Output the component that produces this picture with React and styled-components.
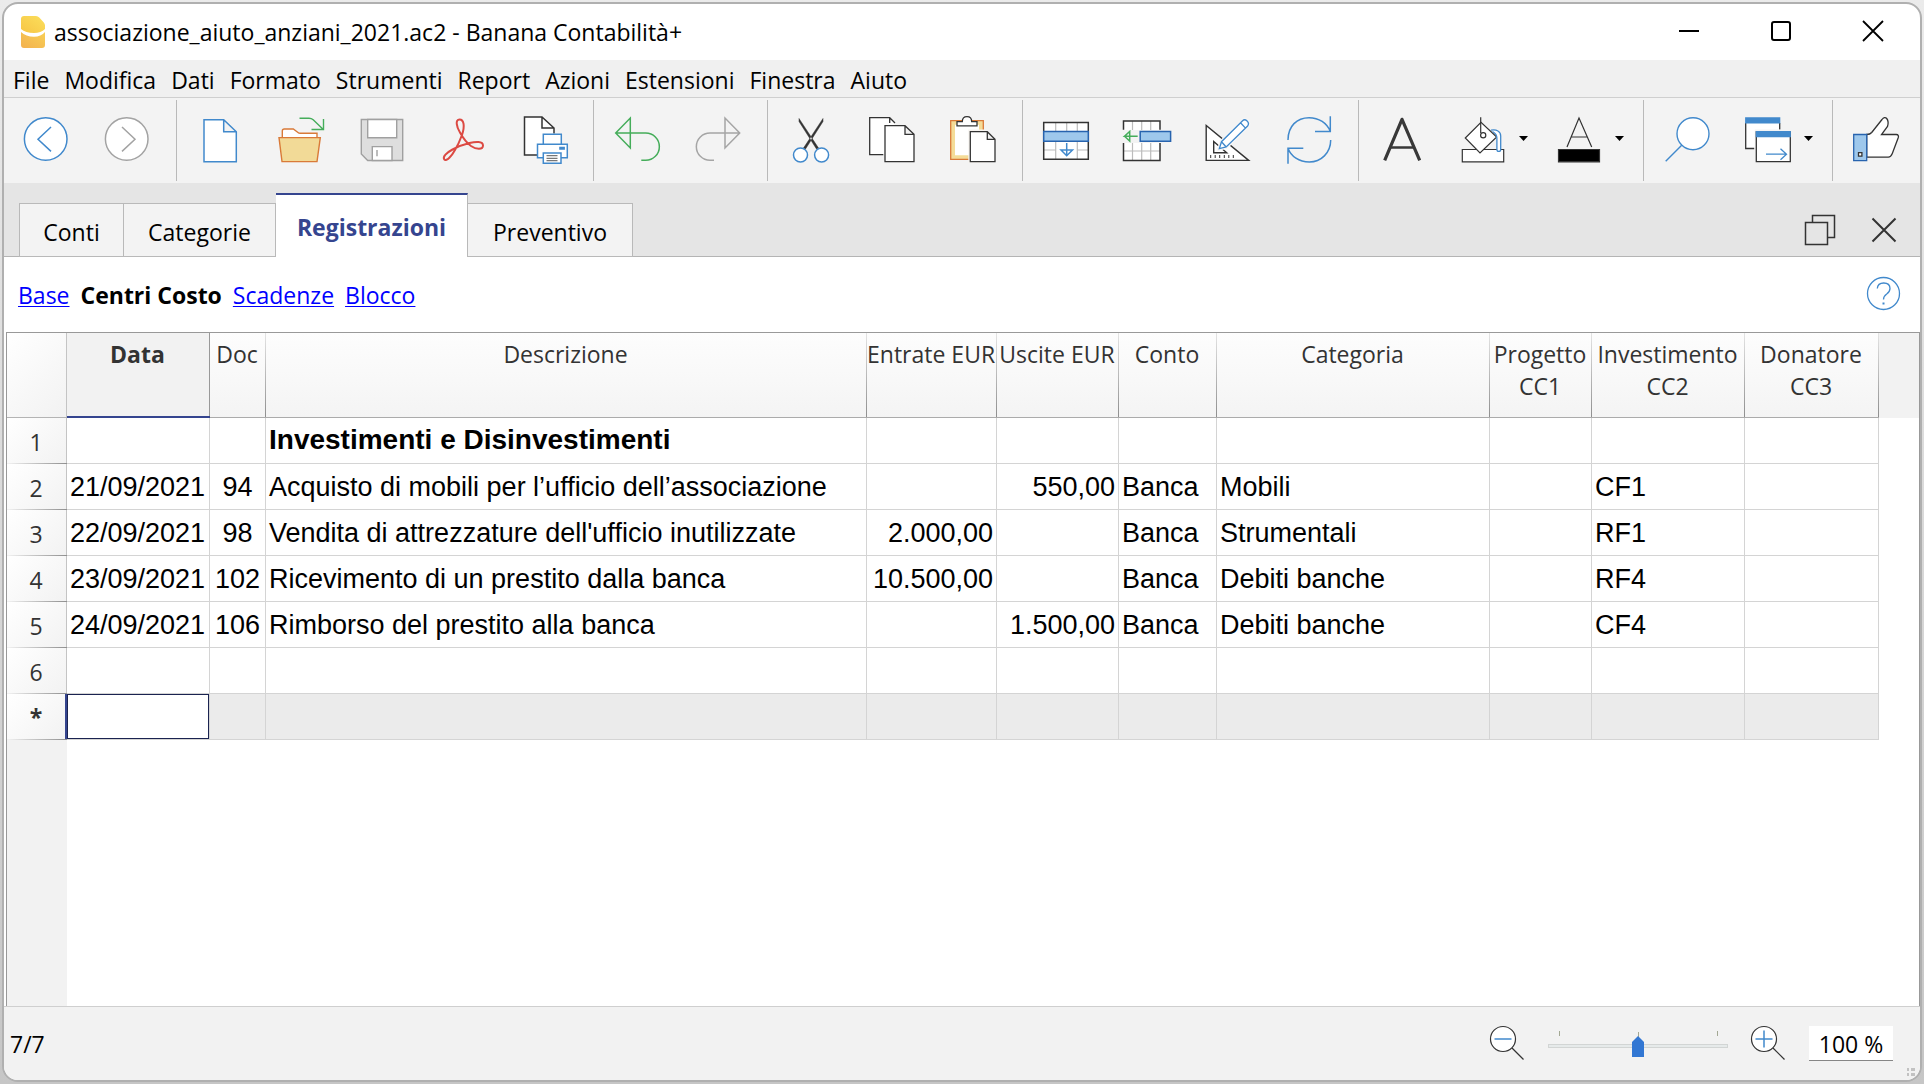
import React from 'react';
import styled, { createGlobalStyle, css } from 'styled-components';

const BLUE = '#4189cc';
const INK = '#333333';
const NAVY = '#35458f';
const GREEN = '#45ad5a';

const GlobalStyle = createGlobalStyle`
  *, *::before, *::after { box-sizing: border-box; }
  html, body, #root { height: 100%; }
  body {
    margin: 0;
    font-family: "Open Sans", "Noto Sans", sans-serif;
    font-size: 23px;
    line-height: 32px;
    color: #000;
    background: linear-gradient(#ebebeb, #c6c6c6);
  }
  button, input { font: inherit; color: inherit; }
  svg { display: block; overflow: visible; flex: none; }
`;

const Page = styled.div`
  height: 100%;
  min-height: 800px;
  padding: 2px;
`;

const Window = styled.div`
  display: flex;
  flex-direction: column;
  height: 100%;
  border: 2px solid #b0b0b0;
  border-radius: 16px;
  background: #fff;
  overflow: hidden;
`;

const TitleBar = styled.header`
  display: flex;
  align-items: center;
  height: 56px;
  padding: 0 1px 0 17px;
`;

const Title = styled.h1`
  flex: 1;
  margin: 0 0 0 9px;
  font-size: 23px;
  font-weight: 400;
  white-space: nowrap;
`;

const PlainButton = styled.button`
  display: flex;
  align-items: center;
  justify-content: center;
  padding: 0;
  border: 0;
  background: none;
`;

const CaptionButton = styled(PlainButton)`
  width: 92px;
  height: 56px;
  padding-bottom: 2px;
`;

const MenuBar = styled.nav`
  display: flex;
  height: 38px;
  padding-left: 1px;
  background: #f0f0f0;
  border-bottom: 1px solid #cfcfcf;
`;

const MenuItem = styled(PlainButton)`
  padding: 2px 7px 0 8px;
`;

const Toolbar = styled.div`
  display: flex;
  align-items: flex-start;
  height: 85px;
  padding: 0 0 2px 1px;
  background: #f3f3f3;
`;

const ToolButton = styled(PlainButton)`
  justify-content: flex-start;
  gap: 12px;
  width: ${(p) => (p.$menu ? 96 : 81)}px;
  height: 81px;
  padding-left: 16px;
`;

const Separator = styled.div`
  align-self: flex-end;
  width: 1px;
  height: 81px;
  margin: 0 2px 0 9px;
  background: #b9b9b9;
`;

const TabStrip = styled.div`
  display: flex;
  align-items: flex-end;
  height: 74px;
  padding-left: 15px;
  background: #e5e5e5;
  box-shadow: inset 0 -1px #b4b4b4;
`;

const Tab = styled(PlainButton)`
  width: ${(p) => p.$width}px;
  height: 54px;
  padding-top: 3px;
  border: 1px solid #b9b9b9;
  border-left-width: ${(p) => (p.$first ? 1 : 0)}px;
  background: #f3f3f3;
  ${(p) => p.$active && css`
    height: 64px;
    padding: 1px 0 0;
    border-top: 2px solid ${NAVY};
    border-bottom: 0;
    background: #fff;
    color: ${NAVY};
    font-weight: 700;
  `}
`;

const TabTools = styled.div`
  display: flex;
  gap: 32px;
  margin-left: auto;
  padding: 0 20px 11px 0;
`;

const ViewBar = styled.nav`
  display: flex;
  align-items: center;
  gap: 11px;
  height: 75px;
  padding: 0 20px 0 14px;
`;

const ViewLink = styled.a`
  color: #0000ff;
  text-decoration: underline;
  text-decoration-thickness: 1px;
  text-underline-offset: 2px;
`;

const CurrentView = styled.strong`
  font-weight: 700;
`;

const HelpButton = styled(PlainButton)`
  margin: 0 0 2px auto;
`;

const Grid = styled.main`
  flex: 1;
  margin: 0 0 0 2px;
  border: 1px solid #999;
  border-bottom: 0;
  background: linear-gradient(to right, #f2f2f2 60px, #fff 60px);
`;

const Table = styled.table`
  width: 100%;
  table-layout: fixed;
  border-collapse: separate;
  border-spacing: 0;
  white-space: nowrap;
`;

const Col = styled.col`
  width: ${(p) => (p.$width ? `${p.$width}px` : 'auto')};
`;

const ColumnHead = styled.th`
  height: 85px;
  padding: 5px 2px 0 0;
  vertical-align: top;
  font-weight: 400;
  color: ${INK};
  border-bottom: 1px solid #ababab;
  background:
    linear-gradient(#e4e4e4, #8f8f8f) right / 1px 100% no-repeat,
    linear-gradient(#fdfdfd, #f4f4f4);
  ${(p) => p.$active && css`
    font-weight: 700;
    border-bottom: 2px solid ${NAVY};
    background:
      linear-gradient(#999, #999) right / 1px 100% no-repeat,
      #f2f2f2;
  `}
`;

const CornerHead = styled.td`
  border-bottom: 1px solid #b4b4b4;
  background:
    linear-gradient(#c4c4c4, #c4c4c4) right / 1px 100% no-repeat,
    linear-gradient(135deg, #fff, #f2f2f2);
`;

const HeadFiller = styled.td`
  background: #f2f2f2;
`;

const RowHead = styled.th`
  height: 46px;
  padding: ${(p) => (p.$marker ? 0 : 1)}px 2px 0 0;
  font-weight: ${(p) => (p.$marker ? 700 : 400)};
  color: ${INK};
  background:
    linear-gradient(to right, #f2f2f2, #8f8f8f) bottom / 100% 1px no-repeat,
    linear-gradient(#c4c4c4, #c4c4c4) right / 1px 100% no-repeat,
    linear-gradient(135deg, #fff, #f2f2f2);
`;

const Cell = styled.td`
  height: 46px;
  padding: ${(p) => (p.$editing ? '0' : '0 3px')};
  border-right: 1px solid #d4d4d4;
  border-bottom: 1px solid #d4d4d4;
  font: 400 27px/32px "Liberation Sans", Arial, sans-serif;
  text-align: ${(p) => p.$align};
  background: ${(p) => (p.$muted ? '#ebebeb' : '#fff')};
  ${(p) => p.$heading && css`
    padding-bottom: 2px;
    font-size: 28px;
    font-weight: 700;
  `}
`;

const CellInput = styled.input`
  display: block;
  width: 100%;
  height: 45px;
  padding: 0 2px;
  border: 1px solid #1a2350;
  border-radius: 0;
  background: #fff;
  box-shadow: -2px 0 0 ${NAVY};
  outline: 0;
`;

const StatusBar = styled.footer`
  display: flex;
  align-items: center;
  gap: 23px;
  height: 74px;
  padding: 0 5px 0 6px;
  border-top: 1px solid #cfcfcf;
  background: #f2f2f2;
`;

const Counter = styled.span`
  flex: 1;
  padding-top: 1px;
`;

const ZoomSlider = styled.input`
  appearance: none;
  width: 180px;
  height: 35px;
  margin: 0;
  padding: 5px 0 0;
  background:
    linear-gradient(#a3a893, #a3a893) 11px 5px / 1px 5px no-repeat,
    linear-gradient(#a3a893, #a3a893) 90px 6px / 1px 5px no-repeat,
    linear-gradient(#a3a893, #a3a893) 169px 5px / 1px 5px no-repeat;

  &::-webkit-slider-runnable-track {
    height: 4px;
    border: 1px solid #d2d5d4;
    background: #e6eaea;
  }
  &::-webkit-slider-thumb {
    appearance: none;
    width: 12px;
    height: 21px;
    margin-top: -9px;
    background: #3277d3;
    clip-path: polygon(0 6px, 6px 0, 100% 6px, 100% 100%, 0 100%);
  }
`;

const ZoomValue = styled.input`
  width: 84px;
  height: 35px;
  padding: 2px 0 0;
  border: 0;
  border-bottom: 1px solid #868686;
  background: #fff;
  text-align: center;
`;

const Grip = styled.div`
  align-self: flex-end;
  display: grid;
  grid-template-columns: 2px 4px;
  gap: 2px;
  margin: 0 0 4px -9px;
`;

const GripDot = styled.i`
  height: 3px;
  background: #c2c2c2;
`;

function Icon({ children, size = 49, color = INK, width = 1.2, ...rest }) {
  return (
    <svg width={size} height={size} viewBox={`0 0 ${size} ${size}`} fill="none" stroke={color} strokeWidth={width} aria-hidden="true" {...rest}>
      {children}
    </svg>
  );
}

const Back = () => (
  <Icon color={BLUE} width={1.5}><circle cx="24.7" cy="25" r="21.3" fill="#fff" /><path d="M30 13 17 25.2l13 12.2" /></Icon>
);
const Forward = () => (
  <Icon color="#a3a3a3" width={1.5}><circle cx="24.7" cy="25" r="21.3" fill="#fff" /><path d="M20 13l13 12.2-13 12.2" /></Icon>
);
const NewFile = () => (
  <Icon color={BLUE} width={1.5}><path d="M9 5.7h19.7l12.6 12v30H9zM28.7 5.7v12h12.6" fill="#fff" /></Icon>
);
const OpenFile = () => (
  <Icon color="#d97a38" width={1.4}>
    <path d="M6.3 23.5V17q0-2 2-2h9l5 3.7q.5.5 2 .5H41v4.3" fill="#fff" />
    <path d="M3 23.6h41.3l-3.3 24H6z" fill="#f2da97" />
    <path d="M23.5 4.3H33q2.5 0 4.200 1.500L47.300 15.500M47.500 5v10.500H35.500" stroke={GREEN} />
  </Icon>
);
const Save = () => (
  <Icon color="#a0a0a0" width={1.4}>
    <path d="M4.3 5.500h41.400v41H10.700L4.300 40z" fill="#dedede" />
    <path d="M10.700 5.500h29v18.200h-29zM15.300 32.600H35v13.900H15.300z" fill="#fff" />
    <path d="M20 36v6.300" />
  </Icon>
);
const Pdf = () => (
  <Icon color="#dc4a43" width={2}>
    <path d="M24 21C27 12 26 5.500 21.500 5.500 17 5.500 18.500 13 22 18.500 25 24 29 29 33 32 38 35.500 45 36 45 31.500 45 27 37.500 27.600 31.500 29 26 30.300 20 32.500 14.500 35.500 8.500 38.800 4.500 42.500 6.200 45.300 8.500 48 14 41.500 17 36 20 31 22.500 25 24 21z" />
  </Icon>
);
const Print = () => (
  <Icon width={1.5}>
    <path d="M18 41H5.500V3H23l12 11v6H24v10h-6z" fill="#fff" stroke="none" />
    <path d="M18 41H5.500V3H23l12 11v5.500M23 3v11h12" />
    <g stroke={BLUE}>
      <path d="M24.300 20.300h18v10h-18zM18.500 30.300h29.800v13.400H18.500z" fill="#fff" />
      <path d="M40.200 32.700h5.700v3h-5.700z" fill={BLUE} stroke="none" />
      <path d="M24.300 39h17.700v10.300H24.300z" fill="#fff" />
    </g>
    <path d="M27.500 41.700h11M27.500 44.300h11M27.500 46.700h11" strokeWidth="1.200" stroke="#777" />
  </Icon>
);
const Undo = () => (
  <Icon color={GREEN} width={1.5}><path d="M3.700 19 18.300 4v30zM3.700 19H33.700a13.650 13.650 0 0 1 0 27.300H29.300" /></Icon>
);
const Redo = () => (
  <Icon color="#a5a5a5" width={1.5}><path d="M46.700 19 32 4v30zM46.700 19H17a13.650 13.650 0 0 0 0 27.300h4" /></Icon>
);
const Cut = () => (
  <Icon width={1}>
    <path d="M13 4.500v3l17.500 27.500 2-1zM37 4.500v3L19.500 35l-2-1z" fill={INK} stroke={INK} strokeWidth="0.500" />
    <g stroke={BLUE} strokeWidth="1.500" fill="#fff"><circle cx="14.500" cy="41" r="7" /><circle cx="35.600" cy="41" r="7" /></g>
  </Icon>
);
const Copy = () => (
  <Icon width={1.3}>
    <path d="M16.300 40.700H2.700v-37h20l5.300 5.300v3H18v28.700z" fill="#fff" stroke="none" />
    <path d="M16.300 40.700H2.700v-37h20L28 9M22.700 3.700V9" />
    <path d="M18 11.700h20l9 8.600v27.400H18zM38 11.700v8.600h9" fill="#fff" />
  </Icon>
);
const Paste = () => (
  <Icon width={1.3}>
    <path d="M2.700 6.700h32.600v38.600H2.700z" fill="#f4dc98" stroke="#d97a38" />
    <path d="M7 10.700h24v30.600H7z" fill="#fff" stroke="none" />
    <path d="M20.300 15.600H38V49H20.300z" fill="#f7f4f0" stroke="none" />
    <path d="M9 11.900V7.700h5.300q0-5 4.700-5t4.700 5H29v4.200z" fill="#fff" />
    <path d="M22.300 17.700h17l7.700 7.600v22.400H22.300zM39.300 17.700v7.600H47" fill="#fff" />
  </Icon>
);
const InsertRow = () => (
  <Icon width={1.5}>
    <path d="M2.700 8.500h44.600v36.800H2.700z" fill="#fff" stroke="none" />
    <path d="M14.700 8.500V18M25.700 8.500V18M36.300 8.500V18M14.700 28v17M36.300 28v17M2.700 36h12M36.300 36h11" stroke="#bcbcbc" strokeWidth="1.200" />
    <path d="M2.700 8.500h44.600v36.800H2.700z" />
    <path d="M2.700 17.500h44.600v9.800H2.700z" fill="#9ec8ec" stroke="#2763ae" />
    <path d="M25.700 29v12.500M20 36h11.500l-5.800 5.800z" stroke={BLUE} />
  </Icon>
);
const DeleteRow = () => (
  <Icon width={1.5}>
    <path d="M1.500 7H38v9H1.500zM1.500 29H38v17.500H1.500z" fill="#fff" stroke="none" />
    <path d="M10.500 7v9M19.700 7v9M28.700 7v9M10.500 29v17.500M19.700 29v17.500M28.700 29v17.500M1.500 37H38" stroke="#bcbcbc" strokeWidth="1.200" />
    <path d="M1.500 15.700V7H38v8.700M1.500 29v17.500H38V29" />
    <path d="M18.200 17.500h30.400v9.800H18.200z" fill="#9ec8ec" stroke="#2763ae" />
    <path d="M15.700 22.300H2.500l5.200-4.800v9.600l-5.200-4.800" stroke={GREEN} />
  </Icon>
);
const Design = () => (
  <Icon width={1.4}>
    <path d="M3.200 11.500v34.900h42.500zM10.700 27.500v11.200h13z" fill="#fff" />
    <path d="M7.700 41v3M12.200 41v3M16.700 41v3M21.300 41v3M25.800 41v3M30.300 41v3" strokeWidth="1" />
    <path d="M16.300 34.700l2.200-7L39.600 6.700q2-2 4.500.3t.5 5L23.200 33z" fill="#fff" stroke="#f6f6f6" strokeWidth="4" />
    <path d="M16.300 34.700l2.200-7L39.600 6.700q2-2 4.500.3t.5 5L23.200 33zM18.500 27.700l4.700 5.300M37.500 8.800l5 5.300" fill="#fff" stroke={BLUE} strokeWidth="1.300" />
  </Icon>
);
const Refresh = () => (
  <Icon color={BLUE} width={1.5}>
    <path d="M4 26C4 12 13 3.700 25 3.700c10 0 18 5.500 21.300 13.800M46.300 2.300v15.200H31M46.700 26C46.700 39 37 48 25.300 48 15 48 7 42.500 4 34.300M4 49.700V34.300h15.300" />
  </Icon>
);
const Bold = () => (
  <Icon color="#383838" width={3.2} strokeLinejoin="round"><path d="M7.700 46.300 25 5.300l17.700 41" /><path d="M14 33.500h22" strokeWidth="2.500" /></Icon>
);
const Fill = () => (
  <Icon width={1.2}>
    <path d="M4.300 35.500h41.400v12.300H4.300z" fill="#fff" />
    <path d="M7.300 24 23 8.300 38.700 23 22 39z" fill="#fff" />
    <path d="M22.700 3.300V19" /><circle cx="25.200" cy="21.300" r="2.600" />
    <path d="M33 16.200C38.500 15 42.700 17.500 42.700 22v13.500a1.900 1.900 0 0 1-3.800 0V24q0-4-4.400-6.500" fill="#fff" stroke={BLUE} strokeWidth="1.300" />
  </Icon>
);
const TextColor = () => (
  <Icon width={1.2}><path d="M13 33 25 4l12.700 29M16.700 23h16.800" /><path d="M4.500 35.500h41v12.300h-41z" fill="#000" /></Icon>
);
const Search = () => (
  <Icon color={BLUE} width={1.4}><circle cx="31" cy="19.700" r="16" fill="#fff" /><path d="M19.700 31.300l-16 16" /></Icon>
);
const Windows = () => (
  <Icon width={1.3}>
    <path d="M2.700 4h34v30.500h-34z" fill="#fff" stroke="none" />
    <path d="M11.300 34.500H2.700V9M36.700 9v6.700" />
    <path d="M2.100 3.300h35.200v6.200H2.100z" fill={BLUE} stroke="none" />
    <path d="M11.700 15.500H49V49H11.700z" fill="#f3f3f3" stroke="none" />
    <path d="M13.300 18h34v29.700h-34z" fill="#fff" />
    <path d="M12.700 17h35.200v6.200H12.700z" fill={BLUE} stroke="none" />
    <path d="M23 40.200h20.500M37.500 34.700l6 5.500-6 5.500" stroke={BLUE} />
  </Icon>
);
const Thumb = () => (
  <Icon width={1.3}>
    <path d="M15.700 20.500c3 0 4-.8 5-2L31 5.500c1.500-2.200 3.500-2.500 4.700-1 1.800 2.500 1.800 5 .8 8l-6 8h14.800c1.800 0 2.500 1.300 2 3l-6 16c-1 2.500-2 3.700-4 3.700H15.700z" fill="#fff" />
    <path d="M2.700 20.500h13v26.200h-13z" fill="#9ec8ec" stroke="#2763ae" />
    <path d="M7.500 38.700h3.400v3.400H7.500z" fill="#fff" />
  </Icon>
);
const Caret = () => (
  <svg width="9" height="5" viewBox="0 0 9 5" aria-hidden="true"><path d="M0 0h9L4.500 5z" fill="#000" /></svg>
);

const Logo = () => (
  <svg width="24" height="32" viewBox="0 0 24 32" aria-hidden="true">
    <defs>
      <linearGradient id="logoTop" x1="0" y1="1" x2="1" y2="0"><stop offset="0" stopColor="#f7c545" /><stop offset="1" stopColor="#fbdf5c" /></linearGradient>
      <linearGradient id="logoBottom" x1="0" y1="1" x2="1" y2="0"><stop offset="0" stopColor="#f3b14f" /><stop offset="1" stopColor="#f8cf55" /></linearGradient>
    </defs>
    <path d="M3 0h12q2 0 3.300 1.500l4.500 5Q24 8 24 9.500V13q-4 4-11 4Q4.500 17 0 13V3q0-3 3-3z" fill="url(#logoTop)" />
    <path d="M0 16q5 4.800 13 4.800 7 0 11-4.800V29q0 3-3 3H3q-3 0-3-3z" fill="url(#logoBottom)" />
  </svg>
);

const toolGroups = [
  [['Indietro', Back], ['Avanti', Forward]],
  [['Nuovo', NewFile], ['Apri', OpenFile], ['Salva', Save], ['Esporta PDF', Pdf], ['Stampa', Print]],
  [['Annulla', Undo], ['Ripeti', Redo]],
  [['Taglia', Cut], ['Copia', Copy], ['Incolla', Paste]],
  [['Inserisci righe', InsertRow], ['Elimina righe', DeleteRow], ['Imposta colonne', Design], ['Ricalcola', Refresh]],
  [['Grassetto', Bold], ['Colore sfondo', Fill, true], ['Colore testo', TextColor, true]],
  [['Cerca', Search], ['Finestre', Windows, true]],
  [['Feedback', Thumb]],
];

const menus = ['File', 'Modifica', 'Dati', 'Formato', 'Strumenti', 'Report', 'Azioni', 'Estensioni', 'Finestra', 'Aiuto'];

const tabs = [
  { label: 'Conti', width: 105 },
  { label: 'Categorie', width: 152 },
  { label: 'Registrazioni', width: 192, active: true },
  { label: 'Preventivo', width: 165 },
];

const columns = [
  { key: 'data', label: 'Data', width: 143, align: 'left', active: true },
  { key: 'doc', label: 'Doc', width: 56, align: 'center' },
  { key: 'descrizione', label: 'Descrizione', align: 'left' },
  { key: 'entrate', label: 'Entrate EUR', width: 130, align: 'right' },
  { key: 'uscite', label: 'Uscite EUR', width: 122, align: 'right' },
  { key: 'conto', label: 'Conto', width: 98, align: 'left' },
  { key: 'categoria', label: 'Categoria', width: 273, align: 'left' },
  { key: 'cc1', label: 'Progetto', sub: 'CC1', width: 102, align: 'left' },
  { key: 'cc2', label: 'Investimento', sub: 'CC2', width: 153, align: 'left' },
  { key: 'cc3', label: 'Donatore', sub: 'CC3', width: 134, align: 'left' },
];

const rows = [
  { descrizione: 'Investimenti e Disinvestimenti', heading: true },
  { data: '21/09/2021', doc: '94', descrizione: 'Acquisto di mobili per l’ufficio dell’associazione', uscite: '550,00', conto: 'Banca', categoria: 'Mobili', cc2: 'CF1' },
  { data: '22/09/2021', doc: '98', descrizione: "Vendita di attrezzature dell'ufficio inutilizzate", entrate: '2.000,00', conto: 'Banca', categoria: 'Strumentali', cc2: 'RF1' },
  { data: '23/09/2021', doc: '102', descrizione: 'Ricevimento di un prestito dalla banca', entrate: '10.500,00', conto: 'Banca', categoria: 'Debiti banche', cc2: 'RF4' },
  { data: '24/09/2021', doc: '106', descrizione: 'Rimborso del prestito alla banca', uscite: '1.500,00', conto: 'Banca', categoria: 'Debiti banche', cc2: 'CF4' },
  {},
];

export default function App() {
  return (
    <>
      <GlobalStyle />
      <Page>
        <Window>
          <TitleBar>
            <Logo />
            <Title>associazione_aiuto_anziani_2021.ac2 - Banana Contabilità+</Title>
            <CaptionButton aria-label="Riduci a icona">
              <Icon size={20} color="#000" width={2}><path d="M0 10h20" /></Icon>
            </CaptionButton>
            <CaptionButton aria-label="Ingrandisci">
              <Icon size={20} color="#000" width={2}><rect x="1" y="1" width="18" height="18" rx="2" /></Icon>
            </CaptionButton>
            <CaptionButton aria-label="Chiudi">
              <Icon size={20} color="#000" width={1.8}><path d="M0 0l20 20M20 0 0 20" /></Icon>
            </CaptionButton>
          </TitleBar>

          <MenuBar aria-label="Menu">
            {menus.map((m) => <MenuItem key={m}>{m}</MenuItem>)}
          </MenuBar>

          <Toolbar role="toolbar" aria-label="Strumenti">
            {toolGroups.map((group, i) => (
              <React.Fragment key={group[0][0]}>
                {i > 0 && <Separator />}
                {group.map(([label, Glyph, menu]) => (
                  <ToolButton key={label} aria-label={label} $menu={menu}>
                    <Glyph />
                    {menu && <Caret />}
                  </ToolButton>
                ))}
              </React.Fragment>
            ))}
          </Toolbar>

          <TabStrip role="tablist">
            {tabs.map((t, i) => (
              <Tab key={t.label} role="tab" aria-selected={!!t.active} $width={t.width} $active={t.active} $first={i === 0}>
                {t.label}
              </Tab>
            ))}
            <TabTools>
              <PlainButton aria-label="Ripristina">
                <Icon size={32} width={1.5}><path d="M8.500 8.500v-7h22v22h-7M1.500 8.500h22v22h-22z" /></Icon>
              </PlainButton>
              <PlainButton aria-label="Chiudi tabella">
                <Icon size={32} width={2}><path d="M4.500 4.500l23 23M27.500 4.500l-23 23" /></Icon>
              </PlainButton>
            </TabTools>
          </TabStrip>

          <ViewBar aria-label="Viste">
            <ViewLink href="#base">Base</ViewLink>
            <CurrentView>Centri Costo</CurrentView>
            <ViewLink href="#scadenze">Scadenze</ViewLink>
            <ViewLink href="#blocco">Blocco</ViewLink>
            <HelpButton aria-label="Aiuto">
              <Icon size={33} color={BLUE} width={1.3}>
                <circle cx="16.500" cy="16.500" r="16" />
                <path d="M10.300 11.500q.4-5.500 6.400-5.500 6.300 0 6.300 5.500 0 3-3.300 5.500-3.200 2.300-3.200 5.500" />
                <path d="M15.500 25.500h2v2h-2z" fill={BLUE} stroke="none" />
              </Icon>
            </HelpButton>
          </ViewBar>

          <Grid>
            <Table>
              <colgroup>
                <Col $width={60} />
                {columns.map((c) => <Col key={c.key} $width={c.width} />)}
                <Col $width={40} />
              </colgroup>
              <thead>
                <tr>
                  <CornerHead />
                  {columns.map((c) => (
                    <ColumnHead key={c.key} scope="col" $active={c.active}>
                      {c.label}
                      {c.sub && <><br />{c.sub}</>}
                    </ColumnHead>
                  ))}
                  <HeadFiller />
                </tr>
              </thead>
              <tbody>
                {rows.map((row, i) => (
                  <tr key={i}>
                    <RowHead scope="row">{i + 1}</RowHead>
                    {columns.map((c) => (
                      <Cell key={c.key} $align={c.align} $heading={row.heading}>{row[c.key]}</Cell>
                    ))}
                  </tr>
                ))}
                <tr>
                  <RowHead scope="row" $marker>*</RowHead>
                  {columns.map((c) => (
                    <Cell key={c.key} $align={c.align} $muted $editing={c.active}>
                      {c.active && <CellInput aria-label="Data, nuova riga" />}
                    </Cell>
                  ))}
                </tr>
              </tbody>
            </Table>
          </Grid>

          <StatusBar>
            <Counter>7/7</Counter>
            <PlainButton aria-label="Riduci zoom">
              <Icon size={35} width={1.2}>
                <circle cx="13" cy="13" r="12.500" fill="#fff" /><path d="M22 22l11.500 11.500" />
                <path d="M4.500 13h17" stroke={BLUE} strokeWidth="1.500" />
              </Icon>
            </PlainButton>
            <ZoomSlider type="range" min="0" max="200" defaultValue="100" aria-label="Zoom" />
            <PlainButton aria-label="Aumenta zoom">
              <Icon size={35} width={1.2}>
                <circle cx="13" cy="13" r="12.500" fill="#fff" /><path d="M22 22l11.500 11.500" />
                <path d="M4.500 13h17M13 4.500v17" stroke={BLUE} strokeWidth="1.500" />
              </Icon>
            </PlainButton>
            <ZoomValue type="text" defaultValue="100 %" aria-label="Livello di zoom" />
            <Grip aria-hidden="true"><GripDot /><GripDot /><GripDot /><GripDot /></Grip>
          </StatusBar>
        </Window>
      </Page>
    </>
  );
}
